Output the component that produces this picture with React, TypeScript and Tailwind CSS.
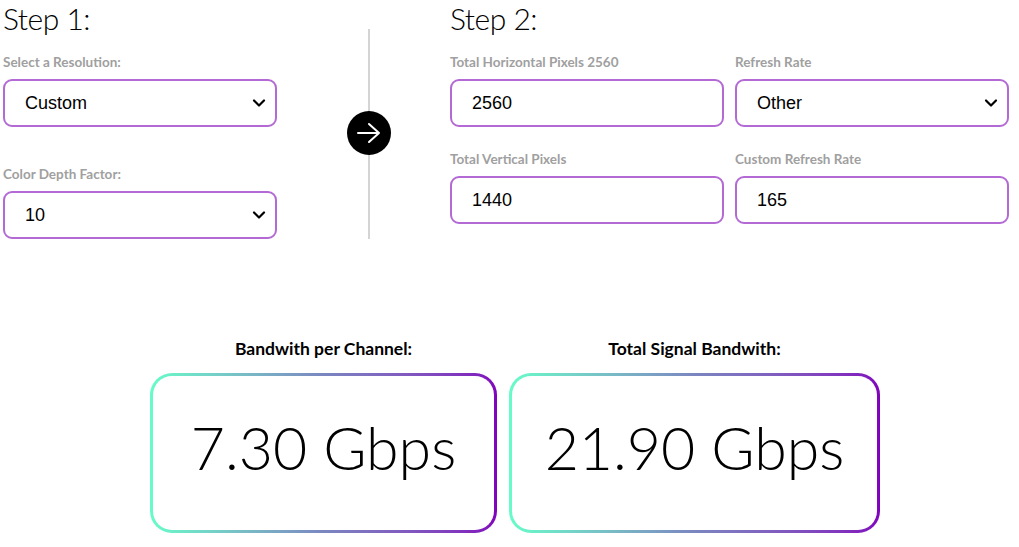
import React from "react";

const Chevron = () => (
  <svg className="pointer-events-none absolute right-[11px] top-1/2 -translate-y-1/2" width="14" height="9" viewBox="0 0 14 9" fill="none">
    <path d="M2 2l5 5 5-5" stroke="#000" strokeWidth="2.2" strokeLinecap="round" strokeLinejoin="round" />
  </svg>
);

const fieldCls =
  "w-full h-[48px] rounded-[9px] border-2 border-[#b36ad4] bg-white pl-[20px] text-[18px] text-black outline-none appearance-none";

function Select({ value }: { value: string }) {
  return (
    <div className="relative w-full">
      <select className={fieldCls} style={{ fontFamily: '"Liberation Sans", Arial, sans-serif' }} defaultValue={value}>
        <option>{value}</option>
      </select>
      <Chevron />
    </div>
  );
}

function Input({ value }: { value: string }) {
  return (
    <input
      className={fieldCls}
      style={{ fontFamily: '"Liberation Sans", Arial, sans-serif' }}
      defaultValue={value}
    />
  );
}

function Label({ children, className = "" }: { children: React.ReactNode; className?: string }) {
  return (
    <div className={"h-[16px] text-[13.5px] leading-[16px] font-bold text-[#a0a0a0] " + className}>{children}</div>
  );
}

function Card({ title, value, w }: { title: string; value: string; w: string }) {
  return (
    <div className="flex flex-col items-center">
      <div className="h-[16px] text-[17.5px] leading-[16px] font-bold text-black mb-[16px]">{title}</div>
      <div className={"rounded-[22px] bg-gradient-to-r from-[#66fcc8] via-[#7a86c0] to-[#8000bc] p-[3px] " + w}>
        <div className="h-[154px] rounded-[19px] bg-white flex items-center justify-center pb-[12px]">
          <span className="text-[59px] font-light leading-none text-black">{value}</span>
        </div>
      </div>
    </div>
  );
}

export default function App() {
  return (
    <div className="w-[1019px] h-[547px] bg-white overflow-hidden" style={{ fontFamily: 'Lato, "Noto Sans", sans-serif' }}>
      <div className="flex pl-[3px]">
        <div className="w-[274px] flex flex-col">
          <div className="h-[36px] text-[30px] leading-[36px] font-light tracking-[-0.5px] text-black">Step 1:</div>
          <Label className="mt-[18px]">Select a Resolution:</Label>
          <div className="mt-[9px]">
            <Select value="Custom" />
          </div>
          <Label className="mt-[39px]">Color Depth Factor:</Label>
          <div className="mt-[9px]">
            <Select value="10" />
          </div>
        </div>
        <div className="w-[173px] flex">
          <div className="relative ml-[91px] mt-[29px] h-[210px] w-[2px] bg-[#d4d4d4]">
            <div className="absolute left-1/2 top-[82px] -translate-x-1/2 w-[44px] h-[44px] rounded-full bg-black flex items-center justify-center">
              <svg width="26" height="22" viewBox="0 0 26 22" fill="none">
                <path d="M2 11h21M13 2l10 9-10 9" stroke="#fff" strokeWidth="2" strokeLinecap="round" strokeLinejoin="round" />
              </svg>
            </div>
          </div>
        </div>
        <div className="w-[559px] flex flex-col">
          <div className="h-[36px] text-[30px] leading-[36px] font-light tracking-[-0.5px] text-black">Step 2:</div>
          <div className="grid grid-cols-[274px_274px] gap-x-[11px] mt-[18px]">
            <div>
              <Label>Total Horizontal Pixels 2560</Label>
              <div className="mt-[9px]"><Input value="2560" /></div>
              <Label className="mt-[24px]">Total Vertical Pixels</Label>
              <div className="mt-[9px]"><Input value="1440" /></div>
            </div>
            <div>
              <Label>Refresh Rate</Label>
              <div className="mt-[9px]"><Select value="Other" /></div>
              <Label className="mt-[24px]">Custom Refresh Rate</Label>
              <div className="mt-[9px]"><Input value="165" /></div>
            </div>
          </div>
        </div>
      </div>
      <div className="mt-[102px] flex justify-center gap-[12px] pl-[11px]">
        <Card title="Bandwith per Channel:" value="7.30 Gbps" w="w-[347px]" />
        <Card title="Total Signal Bandwith:" value="21.90 Gbps" w="w-[371px]" />
      </div>
    </div>
  );
}
